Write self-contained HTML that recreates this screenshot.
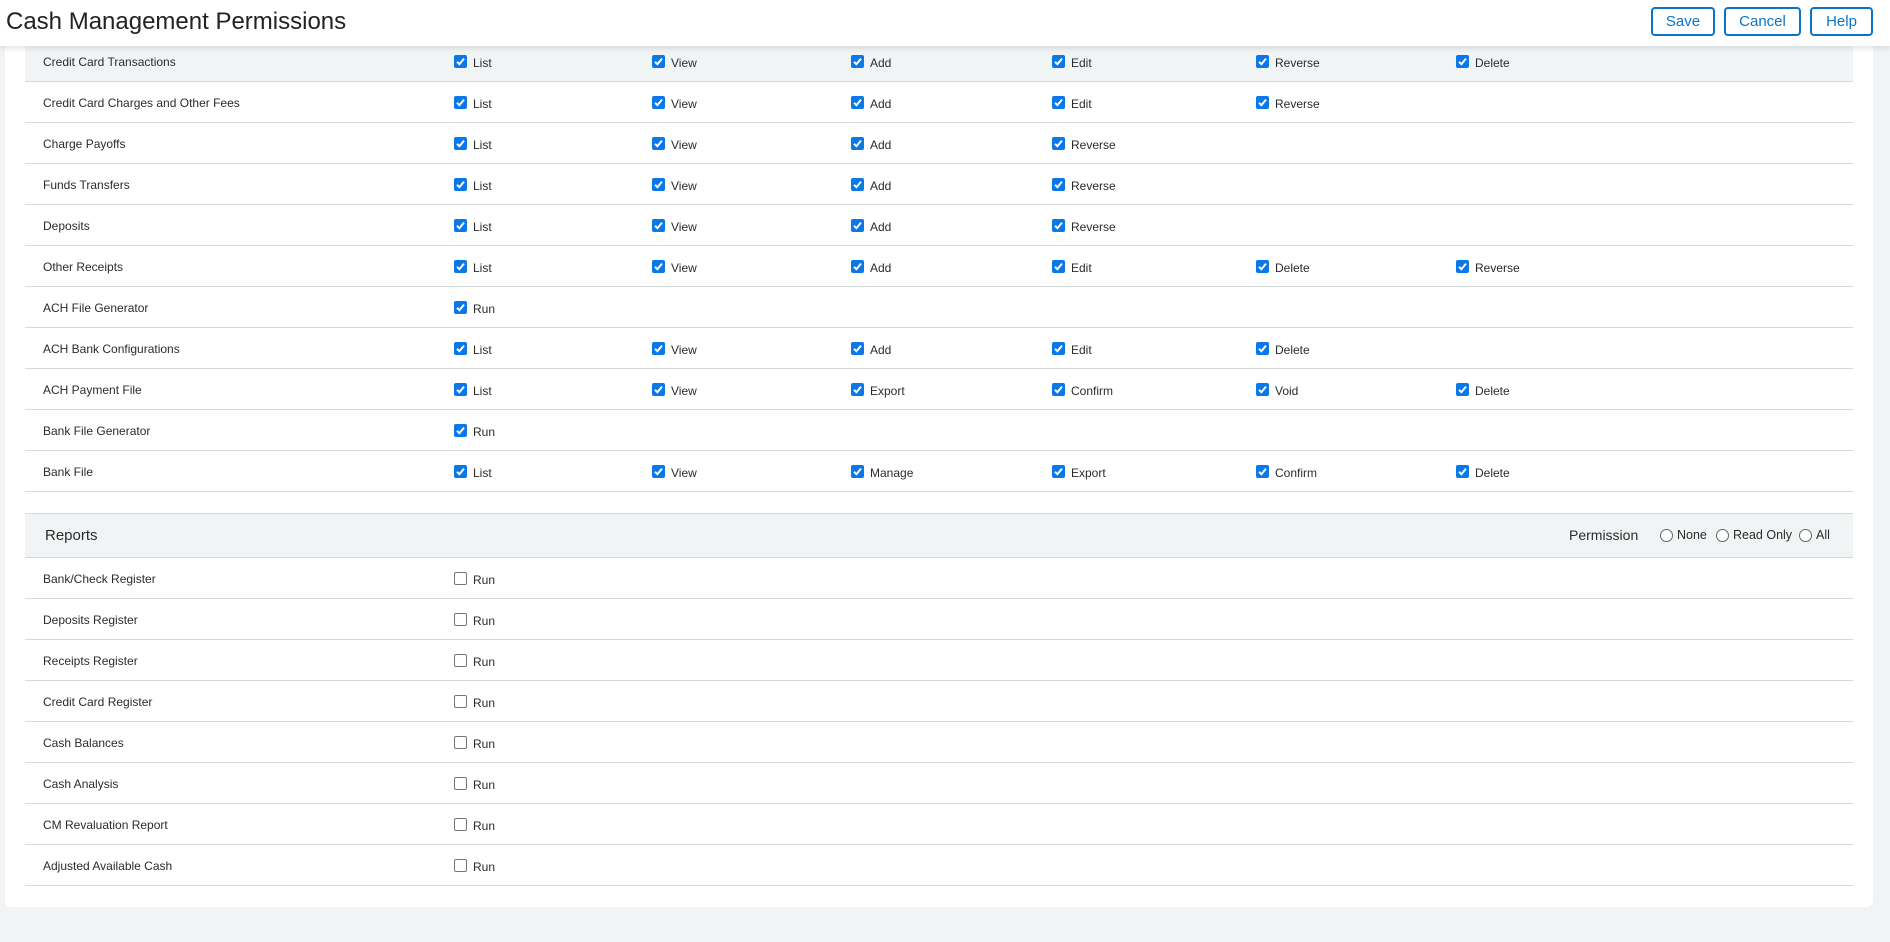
<!DOCTYPE html>
<html><head><meta charset="utf-8"><style>
*{box-sizing:border-box;margin:0;padding:0}
body{width:1890px;height:942px;background:#f1f3f4;font-family:"Liberation Sans",Arial,sans-serif;color:#2b2b2b;position:relative;overflow:hidden}
.panel{position:absolute;left:5px;top:30px;width:1868px;height:877px;background:#fff;border-radius:0 0 6px 6px}
.hdr{position:absolute;left:0;top:0;width:1890px;height:46px;background:#fff;box-shadow:0 2px 6px rgba(0,0,0,.12);z-index:5}
.hdr h1{position:absolute;left:6px;top:8px;font-size:24px;font-weight:normal;color:#222}
.btn{position:absolute;top:7px;height:29px;border:2px solid #0a74c9;border-radius:4px;color:#0a74c9;font-size:15px;text-align:center;line-height:25px;background:#fff}
.row{position:absolute;left:25px;width:1828px;height:41px;border-bottom:1.5px solid #d3dadd;font-size:12px}
.row .l{position:absolute;left:18px;top:14px}
.cb{position:absolute;top:14px;width:13px;height:13px;border-radius:2px;background:#0b78ea}
.cb svg{position:absolute;left:1px;top:1px}
.cb.e{background:#fff;border:1px solid #777}
.t{position:absolute;top:15px}
.rad{position:absolute;top:19px;width:13px;height:13px;border:1px solid #666;border-radius:50%;background:#fff}
</style></head><body>
<div class="panel"></div>
<div class="hdr"><h1>Cash Management Permissions</h1>
<div class="btn" style="left:1651px;width:64px">Save</div>
<div class="btn" style="left:1724px;width:77px">Cancel</div>
<div class="btn" style="left:1810px;width:63px">Help</div>
</div>
<div id="rows"></div>
<div class="row" style="top:513px;height:45px;background:#f1f4f5;border-top:1.5px solid #d3dadd;font-size:15px">
<div style="position:absolute;left:20px;top:13px">Reports</div>
<div style="position:absolute;left:1544px;top:13px;font-size:14px">Permission</div>
<div class="rad" style="left:1635px;top:15px"></div><div style="position:absolute;left:1652px;top:14px;font-size:12.5px">None</div>
<div class="rad" style="left:1691px;top:15px"></div><div style="position:absolute;left:1708px;top:14px;font-size:12.5px">Read Only</div>
<div class="rad" style="left:1774px;top:15px"></div><div style="position:absolute;left:1791px;top:14px;font-size:12.5px">All</div>
</div>
<script>
var cols=[454,652,851,1052,1256,1456];
var ck='<svg width="11" height="11" viewBox="0 0 11 11"><path d="M2 5.8 L4.4 8.2 L9 2.6" stroke="#fff" stroke-width="2" fill="none"/></svg>';
var topRows=[
["Credit Card Transactions",["List","View","Add","Edit","Reverse","Delete"]],
["Credit Card Charges and Other Fees",["List","View","Add","Edit","Reverse"]],
["Charge Payoffs",["List","View","Add","Reverse"]],
["Funds Transfers",["List","View","Add","Reverse"]],
["Deposits",["List","View","Add","Reverse"]],
["Other Receipts",["List","View","Add","Edit","Delete","Reverse"]],
["ACH File Generator",["Run"]],
["ACH Bank Configurations",["List","View","Add","Edit","Delete"]],
["ACH Payment File",["List","View","Export","Confirm","Void","Delete"]],
["Bank File Generator",["Run"]],
["Bank File",["List","View","Manage","Export","Confirm","Delete"]]];
var rep=["Bank/Check Register","Deposits Register","Receipts Register","Credit Card Register","Cash Balances","Cash Analysis","CM Revaluation Report","Adjusted Available Cash"];
var h="";
function mkrow(y,label,items,checked,bg){
 var s='<div class="row" style="top:'+y+'px'+(bg?';background:#f1f4f5':'')+'"><div class="l">'+label+'</div>';
 items.forEach(function(it,i){var x=cols[i]-25;
  s+='<div class="cb'+(checked?'':' e')+'" style="left:'+x+'px">'+(checked?ck:'')+'</div><div class="t" style="left:'+(x+19)+'px">'+it+'</div>';});
 return s+'</div>';}
topRows.forEach(function(r,i){h+=mkrow(41+41*i,r[0],r[1],true,i==0);});
rep.forEach(function(r,i){h+=mkrow(558+41*i,r,["Run"],false,false);});
document.getElementById("rows").innerHTML=h;
</script>
</body></html>
